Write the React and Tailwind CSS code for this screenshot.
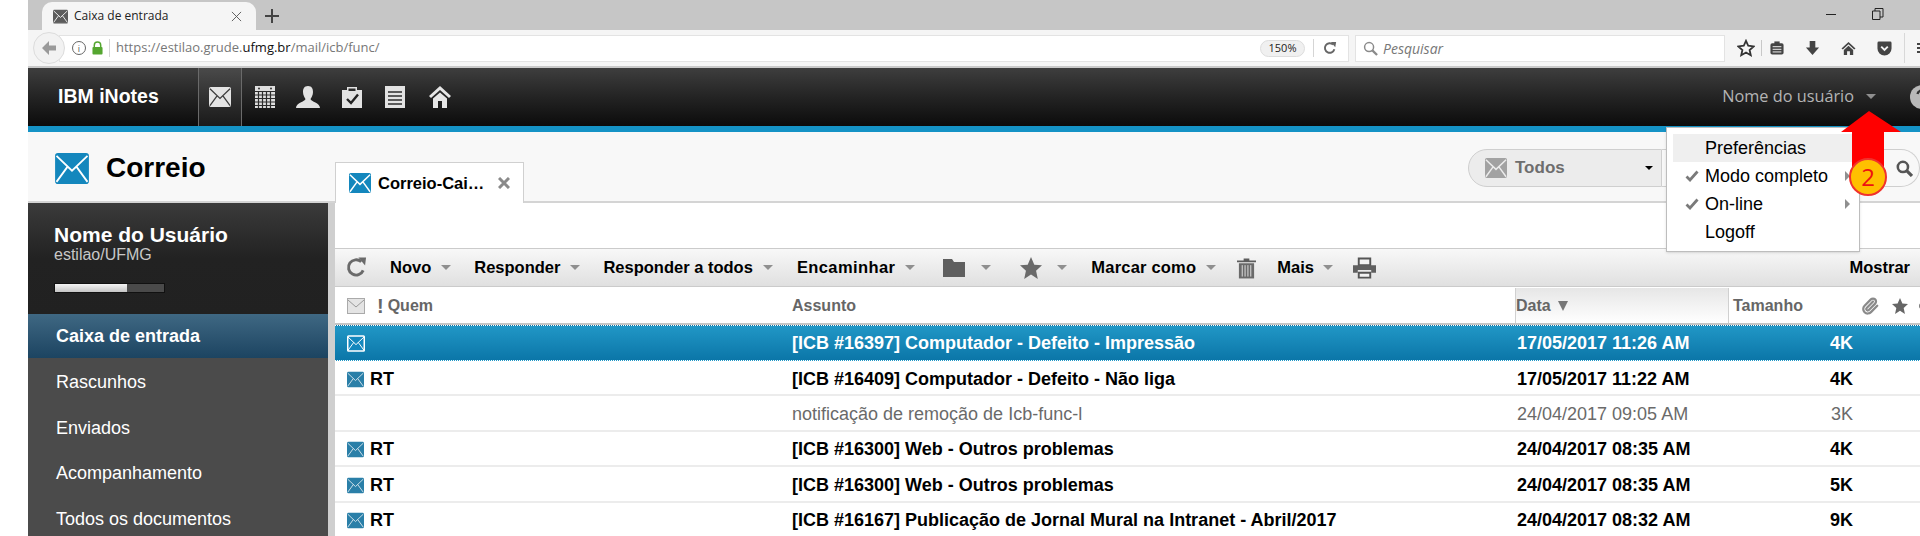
import { Paperclip } from 'lucide-react';

const rows = [
  { icon: true, sender: '', subject: '[ICB #16397] Computador - Defeito - Impressão', date: '17/05/2017 11:26 AM', size: '4K', selected: true },
  { icon: true, sender: 'RT', subject: '[ICB #16409] Computador - Defeito - Não liga', date: '17/05/2017 11:22 AM', size: '4K' },
  { icon: false, sender: '', subject: 'notificação de remoção de Icb-func-l', date: '24/04/2017 09:05 AM', size: '3K', read: true },
  { icon: true, sender: 'RT', subject: '[ICB #16300] Web - Outros problemas', date: '24/04/2017 08:35 AM', size: '4K' },
  { icon: true, sender: 'RT', subject: '[ICB #16300] Web - Outros problemas', date: '24/04/2017 08:35 AM', size: '5K' },
  { icon: true, sender: 'RT', subject: '[ICB #16167] Publicação de Jornal Mural na Intranet - Abril/2017', date: '24/04/2017 08:32 AM', size: '9K' },
];

const folders = ['Rascunhos', 'Enviados', 'Acompanhamento', 'Todos os documentos'];

const MailIcon = ({ className = '', fill = '#1487bd', line = '#ffffff', sw = 1.6, outline = false }) => (
  <svg viewBox="0 0 24 22" className={`shrink-0 ${className}`}>
    <rect x="1" y="1" width="22" height="20" rx="1" fill={fill} stroke={outline ? line : fill} strokeWidth="2" />
    <path d="M1 2 L12 12.5 L23 2 M1 20.5 L9 9.5 M23 20.5 L15 9.5" stroke={line} strokeWidth={sw} fill="none" />
  </svg>
);

const Caret = ({ className = '' }) => (
  <div className={`h-0 w-0 border-x-[5px] border-t-[5px] border-x-transparent border-t-[#8f8f8f] ${className}`} />
);

const ToolText = ({ children, className = '' }) => (
  <span className={`text-[16.5px] font-bold text-black ${className}`}>{children}</span>
);

const Check = () => (
  <svg viewBox="0 0 14 12" className="absolute left-[12px] h-[12px] w-[14px]"><path d="M1.5 6.5 L5 10 L12.5 1.5" stroke="#7a7a7a" strokeWidth="2.8" fill="none" /></svg>
);

const Browser = () => (
  <div className="font-['Open_Sans',sans-serif]">
    <div className="flex h-[30px] items-end bg-[#c6c6c6] pl-[14px]">
      <div className="flex h-[28px] w-[214px] items-center rounded-t-[10px] bg-[#f5f5f5] pl-[11px]">
        <MailIcon className="h-[15px] w-[15px]" fill="#5c5c5c" line="#e8e8e8" />
        <span className="ml-[6px] text-[12px] text-[#222]">Caixa de entrada</span>
        <svg viewBox="0 0 12 12" className="ml-[63px] h-[11px] w-[11px]"><path d="M1 1 L11 11 M11 1 L1 11" stroke="#555" strokeWidth="1" /></svg>
      </div>
      <svg viewBox="0 0 14 14" className="mb-[7px] ml-[9px] h-[14px] w-[14px]"><path d="M7 0 V14 M0 7 H14" stroke="#444" strokeWidth="2" /></svg>
      <div className="mb-[15px] ml-auto h-[1.5px] w-[10px] bg-[#222]" />
      <svg viewBox="0 0 12 12" className="mb-[10px] ml-[36px] mr-[36px] h-[12px] w-[12px]"><path d="M0.5 3 H8 V11.5 H0.5 Z M3 3 V0.5 H11 V9 H8" stroke="#222" fill="none" /></svg>
    </div>
    <div className="flex h-[38px] items-center border-b-2 border-[#c9c9c9] bg-[#f5f5f5]">
      <div className="z-10 ml-[5px] flex h-[32px] w-[32px] shrink-0 items-center justify-center rounded-full border border-[#dcdcdc] bg-[#f2f2f2]">
        <svg viewBox="0 0 16 16" className="h-[16px] w-[16px]"><path d="M8 1 L1 8 L8 15 V10.5 H15 V5.5 H8 Z" fill="#9a9a9a" /></svg>
      </div>
      <div className="-ml-[6px] flex h-[27px] w-[1290px] shrink-0 items-center border border-[#e3e3e3] bg-white pl-[12px]">
        <div className="flex h-[14px] w-[14px] items-center justify-center rounded-full border border-[#666] text-[9px] leading-none text-[#555]">i</div>
        <svg viewBox="0 0 12 14" className="ml-[6px] h-[14px] w-[11px]"><path d="M2.5 6 V4 a3.5 3.5 0 0 1 7 0 V6" stroke="#55a630" strokeWidth="1.6" fill="none" /><rect x="0.5" y="6" width="11" height="8" rx="1" fill="#55a630" /></svg>
        <div className="ml-[6px] h-[18px] w-px bg-[#d5d5d5]" />
        <span className="ml-[6px] text-[13px] text-[#777]">https://estilao.grude.<span className="text-[#111]">ufmg.br</span>/mail/icb/func/</span>
        <div className="ml-auto flex h-[17px] w-[45px] items-center justify-center rounded-full border border-[#ddd] bg-[#f0f0f0] text-[11px] text-[#222]">150%</div>
        <div className="ml-[8px] h-[18px] w-px bg-[#d5d5d5]" />
        <svg viewBox="0 0 16 16" className="ml-[9px] mr-[11px] h-[14px] w-[14px]"><path d="M13 9.5 A5.5 5.5 0 1 1 11.5 4" stroke="#666" strokeWidth="2.2" fill="none" /><path d="M9 1 L15 1 L14 7 Z" fill="#666" /></svg>
      </div>
      <div className="ml-[6px] flex h-[27px] w-[370px] shrink-0 items-center border border-[#e3e3e3] bg-white pl-[7px]">
        <svg viewBox="0 0 16 16" className="h-[15px] w-[15px]"><circle cx="6.5" cy="6.5" r="4.8" stroke="#8a8a8a" strokeWidth="1.6" fill="none" /><path d="M10 10 L15 15" stroke="#8a8a8a" strokeWidth="2.4" /></svg>
        <span className="ml-[5px] text-[14px] italic text-[#777]">Pesquisar</span>
      </div>
      <svg viewBox="0 0 20 20" className="ml-[12px] h-[18px] w-[18px] shrink-0"><path d="M10 2 L12.5 7.5 L18.5 8.2 L14 12.2 L15.3 18 L10 15 L4.7 18 L6 12.2 L1.5 8.2 L7.5 7.5 Z" stroke="#333" strokeWidth="2" fill="none" /></svg>
      <div className="ml-[6px] h-[16px] w-px shrink-0 bg-[#c8c8c8]" />
      <svg viewBox="0 0 16 16" className="ml-[8px] h-[16px] w-[14px] shrink-0"><rect x="0.5" y="2.5" width="15" height="13" rx="2" fill="#444" /><rect x="5" y="0.5" width="6" height="3" fill="#444" /><path d="M3 6.5 H13 M3 9.5 H13 M3 12.5 H13" stroke="#f5f5f5" strokeWidth="1.1" /></svg>
      <svg viewBox="0 0 16 16" className="ml-[21px] h-[15px] w-[15px] shrink-0"><path d="M5 0 H11 V7 H15 L8 15 L1 7 H5 Z" fill="#444" /></svg>
      <svg viewBox="0 0 16 16" className="ml-[21px] h-[15px] w-[15px] shrink-0"><path d="M8 1 L15.5 8 L14 9 L8 3.5 L2 9 L0.5 8 Z M3 9.5 L8 5 L13 9.5 V15 H9.5 V11 H6.5 V15 H3 Z" fill="#444" /></svg>
      <svg viewBox="0 0 16 16" className="ml-[21px] h-[15px] w-[15px] shrink-0"><path d="M0.5 2 a1.5 1.5 0 0 1 1.5 -1.5 H14 a1.5 1.5 0 0 1 1.5 1.5 V8 a7.5 7.5 0 0 1 -15 0 Z" fill="#444" /><path d="M4.5 6 L8 9.5 L11.5 6" stroke="#f5f5f5" strokeWidth="2" fill="none" /></svg>
      <div className="ml-[12px] h-[30px] w-px shrink-0 bg-[#d8d8d8]" />
      <div className="ml-[12px] flex shrink-0 flex-col gap-[2px]">
        <div className="h-[2px] w-[10px] bg-[#444]" />
        <div className="h-[2px] w-[10px] bg-[#444]" />
        <div className="h-[2px] w-[10px] bg-[#444]" />
      </div>
    </div>
  </div>
);

const AppBar = () => (
  <div>
    <div className="flex h-[58px] items-stretch bg-gradient-to-b from-[#3e3e3e] to-[#0c0c0c]">
      <div className="flex w-[170px] items-center pl-[30px] text-[19.5px] font-bold text-white">IBM iNotes</div>
      <div className="flex w-[44px] items-center justify-center border-x border-[#6a6a6a] bg-gradient-to-b from-[#4a4a4a] to-[#1a1a1a]">
        <MailIcon className="h-[22px] w-[22px]" fill="#e4e4e4" line="#3c3c3c" sw={1.4} />
      </div>
      <div className="flex items-center">
        <svg viewBox="0 0 20 22" className="ml-[13px] h-[22px] w-[20px]"><rect width="20" height="22" fill="#dedede" /><path d="M0 5.5 H20 M0 9 H20 M0 12.5 H20 M0 16 H20 M0 19.5 H20 M3.5 5.5 V22 M7.5 5.5 V22 M11.5 5.5 V22 M15.5 5.5 V22" stroke="#2c2c2c" strokeWidth="1.2" /><circle cx="4" cy="2.5" r="1" fill="#333" /><circle cx="16" cy="2.5" r="1" fill="#333" /></svg>
        <svg viewBox="0 0 24 22" className="ml-[21px] h-[22px] w-[24px]"><path d="M12 0 C16 0 17 3 17 6 C17 9 15.5 11.5 14.5 13 C15 15.5 24 17 24 22 H0 C0 17 9 15.5 9.5 13 C8.5 11.5 7 9 7 6 C7 3 8 0 12 0 Z" fill="#e2e2e2" /></svg>
        <svg viewBox="0 0 22 22" className="ml-[21px] h-[22px] w-[22px]"><path d="M1 4 H6 V1 H16 V4 H21 V22 H1 Z" fill="#e2e2e2" /><rect x="7.5" y="2.5" width="7" height="2.5" fill="#2c2c2c" /><path d="M6 13 L10 17 L17 8.5" stroke="#222" strokeWidth="2.4" fill="none" /></svg>
        <svg viewBox="0 0 20 22" className="ml-[22px] h-[22px] w-[20px]"><rect width="20" height="22" fill="#e2e2e2" /><path d="M3 6 H17 M3 10 H17 M3 14 H17 M3 18 H17" stroke="#2c2c2c" strokeWidth="1.6" /></svg>
        <svg viewBox="0 0 22 22" className="ml-[24px] h-[22px] w-[22px]"><path d="M11 0 L22 10 L20 12 L11 4 L2 12 L0 10 Z M4 12.5 L11 6.5 L18 12.5 V22 H13 V15 H9 V22 H4 Z" fill="#e6e6e6" /></svg>
      </div>
      <div className="ml-auto flex items-center pb-[2px]">
        <span className="text-[16.3px] text-[#b4b4b4] [font-family:'Open_Sans',sans-serif]">Nome do usuário</span>
        <Caret className="ml-[12px]" />
        <svg viewBox="0 0 24 24" className="-mr-[14px] ml-[34px] mt-[2px] h-[24px] w-[24px] shrink-0"><circle cx="12" cy="12" r="12" fill="#b8b8b8" /><path d="M7.5 9 a4.5 4 0 1 1 6.5 4 q-2 1 -2 3" stroke="#333" strokeWidth="2.4" fill="none" /></svg>
      </div>
    </div>
    <div className="h-[6px] bg-[#1593c6]" />
  </div>
);

const SubHeader = () => (
  <div className="flex h-[71px] border-b-2 border-[#d4d4d4] bg-[#f8f8f8]">
    <div className="flex w-[307px] shrink-0 items-start pl-[27px] pt-[21px]">
      <MailIcon className="h-[31px] w-[34px]" fill="#1487bd" line="#ffffff" sw={1.3} />
      <span className="ml-[17px] mt-[1px] text-[28px] font-bold leading-[28px] text-black">Correio</span>
    </div>
    <div className="-mb-[2px] mt-[30px] flex h-[41px] w-[190px] items-center border-x border-t border-[#d0d0d0] bg-white pl-[13px]">
      <MailIcon className="h-[22px] w-[22px]" />
      <span className="ml-[7px] text-[16.5px] font-bold text-black">Correio-Cai…</span>
      <svg viewBox="0 0 12 12" className="ml-[14px] h-[12px] w-[12px]"><path d="M1 1 L11 11 M11 1 L1 11" stroke="#8a8a8a" strokeWidth="3" /></svg>
    </div>
    <div className="ml-[944px] mt-[17px] flex h-[38px] w-[194px] shrink-0 items-center rounded-l-[19px] border border-[#cfcfcf] bg-[#ececec] pl-[16px]">
      <MailIcon className="h-[22px] w-[22px]" fill="#a2a2a2" line="#ececec" />
      <span className="ml-[8px] text-[17px] font-bold text-[#6e6e6e]">Todos</span>
      <div className="ml-[80px] h-0 w-0 border-x-[4px] border-t-[4px] border-x-transparent border-t-black" />
    </div>
    <div className="mt-[17px] flex h-[38px] w-[258px] shrink-0 items-center justify-end rounded-r-[19px] border-y border-r border-[#cfcfcf] pr-[6px]">
      <svg viewBox="0 0 16 16" className="h-[17px] w-[17px]"><circle cx="6.5" cy="6.5" r="4.8" stroke="#555" strokeWidth="2.4" fill="none" /><path d="M10 10 L15 15" stroke="#555" strokeWidth="3" /></svg>
    </div>
  </div>
);

const Sidebar = () => (
  <aside className="w-[300px] shrink-0 bg-[#4b4b4b]">
    <div className="h-[111px] bg-gradient-to-b from-[#3b3b3b] via-[#222] to-[#212121] pl-[26px] pt-[20px]">
      <div className="text-[21px] font-bold leading-[24px] text-white">Nome do Usuário</div>
      <div className="text-[16px] leading-[16px] text-[#c8c8c8]">estilao/UFMG</div>
      <div className="mt-[20px] flex h-[10px] w-[111px] border border-[#111] bg-[#4a4a4a]">
        <div className="w-[72px] bg-gradient-to-b from-[#f4f4f4] to-[#c4c4c4]" />
      </div>
    </div>
    <div className="flex h-[44px] items-center bg-gradient-to-b from-[#3f6883] to-[#1c4461] pl-[28px] text-[18px] font-bold text-white">Caixa de entrada</div>
    <div className="pt-[2px]">
      {folders.map((name) => (
        <div key={name} className="flex h-[45.6px] items-center pl-[28px] text-[18px] text-white">{name}</div>
      ))}
    </div>
  </aside>
);

const Toolbar = () => (
  <div className="flex h-[39px] items-center border-y border-[#cbcbcb] bg-gradient-to-b from-[#f8f8f8] to-[#e0e0e0] pl-[11px]">
    <svg viewBox="0 0 22 22" className="h-[21px] w-[21px]"><path d="M18 14 A8 8 0 1 1 16 5" stroke="#6a6a6a" strokeWidth="3" fill="none" /><path d="M13 0.5 L21 0.5 L20 9 Z" fill="#6a6a6a" /></svg>
    <ToolText className="ml-[23px]">Novo</ToolText>
    <Caret className="ml-[10px]" />
    <ToolText className="ml-[23px]">Responder</ToolText>
    <Caret className="ml-[10px]" />
    <ToolText className="ml-[23px]">Responder a todos</ToolText>
    <Caret className="ml-[10px]" />
    <ToolText className="ml-[24px] tracking-[0.4px]">Encaminhar</ToolText>
    <Caret className="ml-[10px]" />
    <svg viewBox="0 0 22 18" className="ml-[28px] h-[18px] w-[22px]"><path d="M0 0 H9 L11 3 H22 V18 H0 Z" fill="#5f5f5f" /></svg>
    <Caret className="ml-[16px]" />
    <svg viewBox="0 0 20 20" className="ml-[29px] h-[22px] w-[22px]"><path d="M10 0 L13 7 L20 7.6 L14.6 12.4 L16.2 20 L10 16 L3.8 20 L5.4 12.4 L0 7.6 L7 7 Z" fill="#6a6a6a" /></svg>
    <Caret className="ml-[15px]" />
    <ToolText className="ml-[24px] tracking-[0.2px]">Marcar como</ToolText>
    <Caret className="ml-[10px]" />
    <svg viewBox="0 0 20 22" className="ml-[21px] h-[22px] w-[19px]"><path d="M7 1 H13 V3 H20 V5 H0 V3 H7 Z" fill="#5c5c5c" /><path d="M2 6 H18 V22 H2 Z" fill="#6a6a6a" /><path d="M5.5 8 V20 M8.5 8 V20 M11.5 8 V20 M14.5 8 V20" stroke="#e4e4e4" strokeWidth="1" /></svg>
    <ToolText className="ml-[21px]">Mais</ToolText>
    <Caret className="ml-[9px]" />
    <svg viewBox="0 0 24 22" className="ml-[20px] h-[22px] w-[23px]"><path d="M6 1 H18 V8 H6 Z M6 16 H18 V21 H6 Z" stroke="#555" strokeWidth="2" fill="#f2f2f2" /><path d="M0 8 H24 V16 H19 V13 H5 V16 H0 Z" fill="#5f5f5f" /></svg>
    <ToolText className="ml-auto mr-[10px]">Mostrar</ToolText>
  </div>
);

const ColumnHeader = () => (
  <div className="grid h-[38px] grid-cols-[457px_723px_214px_1fr] border-b-2 border-[#c6c6c6] bg-white pt-[1px] text-[16px] font-bold text-[#666]">
    <div className="flex items-center pl-[12px]">
      <svg viewBox="0 0 18 16" className="h-[16px] w-[18px]"><rect x="0.5" y="0.5" width="17" height="15" fill="#e4e4e4" stroke="#aaa" /><path d="M1 2 L9 9 L17 2" stroke="#999" fill="none" /></svg>
      <span className="ml-[12px] text-[20px] leading-none">!</span>
      <span className="ml-[4px]">Quem</span>
    </div>
    <div className="flex items-center">Assunto</div>
    <div className="flex items-center border-x border-[#d0d0d0] bg-gradient-to-b from-[#e6e6e6] to-white">
      Data
      <div className="ml-[7px] h-0 w-0 border-x-[5px] border-t-[10px] border-x-transparent border-t-[#777]" />
    </div>
    <div className="flex items-center pl-[4px]">
      Tamanho
      <Paperclip className="ml-[58px] h-[18px] w-[18px] shrink-0 text-[#8a8a8a]" strokeWidth={3} />
      <svg viewBox="0 0 20 20" className="ml-[13px] h-[16px] w-[16px] shrink-0"><path d="M10 0 L13 7 L20 7.6 L14.6 12.4 L16.2 20 L10 16 L3.8 20 L5.4 12.4 L0 7.6 L7 7 Z" fill="#666" /></svg>
      <div className="ml-[11px] h-[6px] w-[6px] shrink-0 rounded-full bg-[#777]" />
    </div>
  </div>
);

const Row = ({ row }) => {
  const tone = row.selected
    ? 'h-[36px] border-y border-dotted border-white bg-gradient-to-b from-[#2097c6] to-[#0b76a8] font-bold text-white'
    : row.read
      ? 'h-[35.4px] border-b-2 border-[#ececec] pt-[3px] font-normal text-[#6a6a6a]'
      : 'h-[35.4px] border-b-2 border-[#ececec] pt-[3px] font-bold text-black';
  return (
    <div className={`grid grid-cols-[457px_725px_220px_116px] items-center text-[18px] ${tone}`}>
      <div className="flex items-center pl-[12px]">
        {row.icon && (row.selected
          ? <MailIcon className="h-[19px] w-[18px]" fill="#1487bd" line="#ffffff" sw={1.3} outline />
          : <MailIcon className="h-[17px] w-[17px]" fill="#2a7fa8" line="#d8e6ee" sw={1.3} />)}
        {row.sender && <span className="ml-[6px]">{row.sender}</span>}
      </div>
      <div>{row.subject}</div>
      <div>{row.date}</div>
      <div className="text-right">{row.size}</div>
    </div>
  );
};

const UserMenu = () => (
  <div className="absolute left-[1666px] top-[127px] h-[125px] w-[194px] border border-[#bdbdbd] bg-white pl-[6px] pr-[6px] pt-[6px] text-[18px] text-black shadow-sm">
    <div className="flex h-[28px] items-center bg-[#efefef] pl-[32px]">Preferências</div>
    <div className="relative flex h-[28px] items-center pl-[32px]">
      <Check />
      Modo completo
      <div className="ml-auto mr-[3px] h-0 w-0 border-y-[5px] border-l-[5px] border-y-transparent border-l-[#8f8f8f]" />
    </div>
    <div className="relative flex h-[28px] items-center pl-[32px]">
      <Check />
      On-line
      <div className="ml-auto mr-[3px] h-0 w-0 border-y-[5px] border-l-[5px] border-y-transparent border-l-[#8f8f8f]" />
    </div>
    <div className="flex h-[28px] items-center pl-[32px]">Logoff</div>
  </div>
);

const StepMarker = () => (
  <div className="absolute left-[1841px] top-[111px] h-[86px] w-[60px]">
    <svg viewBox="0 0 60 60" className="h-[60px] w-[60px]"><path d="M28 0 L60 21 H43 V60 H11 V21 H0 Z" fill="#ff0000" /></svg>
    <div className="absolute left-[8px] top-[47px] flex h-[38px] w-[38px] items-center justify-center rounded-full border-2 border-[#f0322c] bg-[#ffc000] font-['Open_Sans',sans-serif] text-[24px] leading-none text-[#ee1111]">2</div>
  </div>
);

export default function App() {
  return (
    <div className="relative h-[536px] w-[1920px] overflow-hidden bg-white pl-[28px] font-['Liberation_Sans',Arial,sans-serif]">
      <Browser />
      <AppBar />
      <SubHeader />
      <div className="flex h-[333px]">
        <Sidebar />
        <div className="w-[7px] shrink-0 bg-[#cfcfcf]" />
        <main className="min-w-0 flex-1 bg-white pt-[45px]">
          <Toolbar />
          <ColumnHeader />
          {rows.map((row, i) => <Row key={i} row={row} />)}
        </main>
      </div>
      <UserMenu />
      <StepMarker />
    </div>
  );
}
